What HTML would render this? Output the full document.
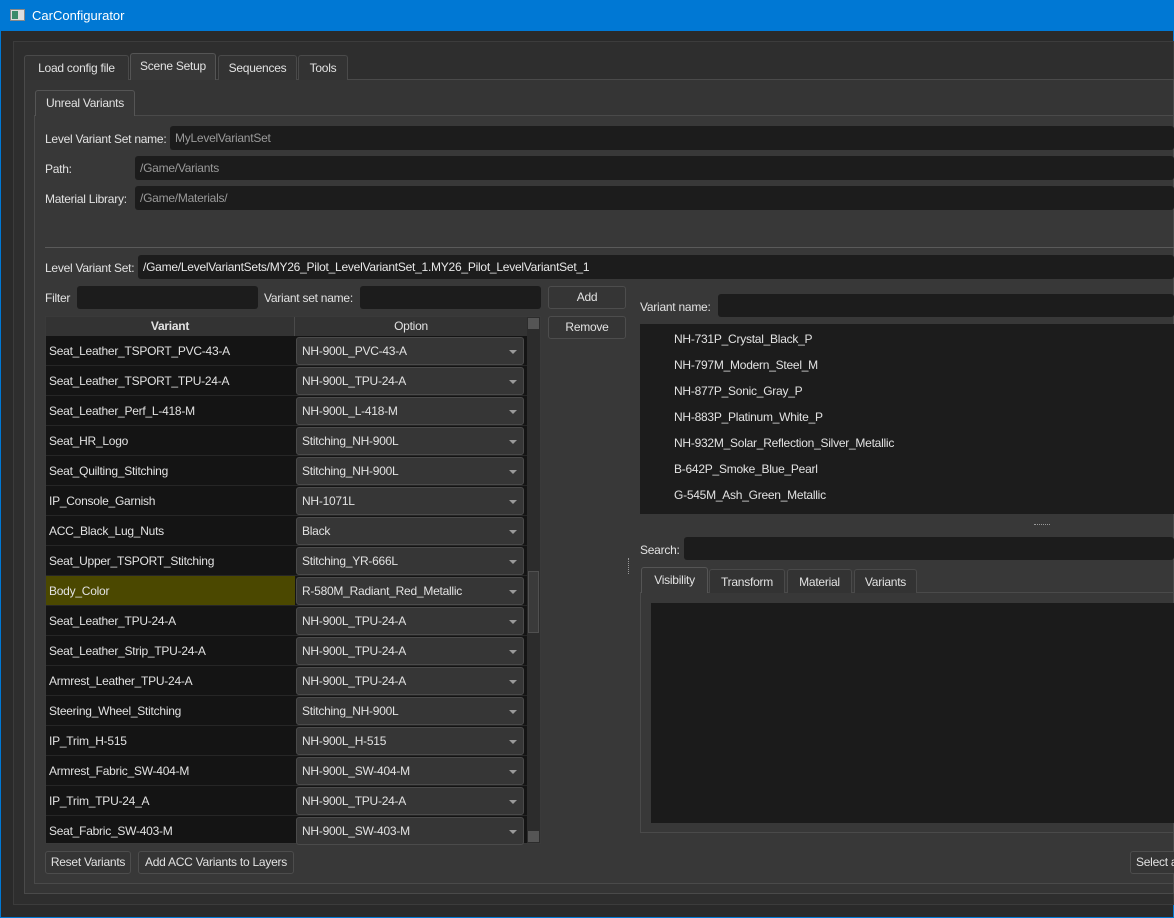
<!DOCTYPE html>
<html><head><meta charset="utf-8"><style>
*{box-sizing:border-box;margin:0;padding:0}
body{width:1174px;height:918px;overflow:hidden;background:#2a2a2a;font-family:"Liberation Sans",sans-serif;font-size:12px;letter-spacing:-0.25px;color:#e2e2e2;position:relative}
.a{position:absolute}
.title{left:0;top:0;width:1174px;height:31px;background:#0078d4;color:#fff;font-size:13px;letter-spacing:0}
.inp{position:absolute;background:#1c1c1c;border-radius:3px;color:#9a9a9a;padding-left:5px;line-height:24px;white-space:nowrap;overflow:hidden}
.lbl{position:absolute;line-height:14px;white-space:nowrap}
.btn{position:absolute;background:#353535;border:1px solid #4d4d4d;border-radius:3px;text-align:center;line-height:20px;color:#e2e2e2;white-space:nowrap}
.tab{position:absolute;background:#333;border:1px solid #4a4a4a;border-bottom:none;border-radius:3px 3px 0 0;text-align:center;line-height:24px;font-size:12px}
.row{position:absolute;left:46px;width:481px;height:30px;border-bottom:1px solid #262626}
.row .v{position:absolute;left:3px;top:8px}
.row .c{position:absolute;left:250px;top:1px;width:228px;height:28px;background:#363636;border:1px solid #4b4b4b;border-radius:3px;padding-left:5px;line-height:27px}
.row .c:after{content:"";position:absolute;right:6px;top:12px;border-left:4px solid transparent;border-right:4px solid transparent;border-top:4px solid #9a9a9a}
.li{position:absolute;left:674px}
</style></head><body>
<div class="a title"><div class="a" style="left:10px;top:9px;width:15px;height:12px;background:#ddd;border:1px solid #888"><div class="a" style="left:1px;top:1px;width:6px;height:8px;background:#3a8a6a"></div></div><div class="a" style="left:32px;top:8px">CarConfigurator</div></div>
<div class="a" style="left:0;top:31px;width:1174px;height:887px;border:1px solid #0078d4;border-top:none;background:#2a2a2a"></div>
<div class="a" style="left:13px;top:41px;width:1161px;height:864px;border:1px solid #3c3c3c;background:#2e2e2e"></div>
<div class="a" style="left:24px;top:79px;width:1150px;height:815px;background:#353535;border:1px solid #4a4a4a"></div>
<div class="tab" style="left:24px;top:55px;width:105px;height:25px">Load config file</div>
<div class="tab" style="left:130px;top:53px;width:86px;height:27px;background:#383838;border-color:#555">Scene Setup</div>
<div class="tab" style="left:218px;top:55px;width:79px;height:25px">Sequences</div>
<div class="tab" style="left:298px;top:55px;width:50px;height:25px">Tools</div>
<div class="a" style="left:34px;top:115px;width:1140px;height:769px;background:#383838;border:1px solid #4a4a4a"></div>
<div class="tab" style="left:35px;top:90px;width:100px;height:26px;background:#383838;border-color:#555">Unreal Variants</div>
<div class="lbl" style="left:45px;top:132px">Level Variant Set name:</div>
<div class="inp" style="left:170px;top:126px;width:1004px;height:24px">MyLevelVariantSet</div>
<div class="lbl" style="left:45px;top:162px">Path:</div>
<div class="inp" style="left:135px;top:156px;width:1039px;height:24px">/Game/Variants</div>
<div class="lbl" style="left:45px;top:192px">Material Library:</div>
<div class="inp" style="left:135px;top:186px;width:1039px;height:24px">/Game/Materials/</div>
<div class="a" style="left:45px;top:247px;width:1129px;height:1px;background:#5a5a5a"></div>
<div class="lbl" style="left:45px;top:261px">Level Variant Set:</div>
<div class="inp" style="left:138px;top:255px;width:1036px;height:24px;color:#e8e8e8">/Game/LevelVariantSets/MY26_Pilot_LevelVariantSet_1.MY26_Pilot_LevelVariantSet_1</div>
<div class="lbl" style="left:45px;top:291px">Filter</div>
<div class="inp" style="left:77px;top:286px;width:181px;height:23px"></div>
<div class="lbl" style="left:264px;top:291px">Variant set name:</div>
<div class="inp" style="left:360px;top:286px;width:181px;height:23px"></div>
<div class="btn" style="left:548px;top:286px;width:78px;height:23px">Add</div>
<div class="btn" style="left:548px;top:316px;width:78px;height:23px">Remove</div>
<div class="a" style="left:45px;top:316px;width:496px;height:528px;background:#141414;border:1px solid #3a3a3a"></div>
<div class="a" style="left:46px;top:317px;width:249px;height:19px;background:#333;border-right:1px solid #4a4a4a;text-align:center;line-height:19px;font-weight:bold">Variant</div>
<div class="a" style="left:295px;top:317px;width:232px;height:19px;background:#333;text-align:center;line-height:19px">Option</div>
<div class="a" style="left:527px;top:317px;width:13px;height:526px;background:#2c2c2c"></div>
<div class="a" style="left:528px;top:318px;width:11px;height:11px;background:#555"></div>
<div class="a" style="left:528px;top:571px;width:11px;height:62px;background:#3a3a3a;border:1px solid #505050"></div>
<div class="a" style="left:528px;top:831px;width:11px;height:11px;background:#555"></div>
<div class="row" style="top:336px"><span class="v">Seat_Leather_TSPORT_PVC-43-A</span><div class="c">NH-900L_PVC-43-A</div></div>
<div class="row" style="top:366px"><span class="v">Seat_Leather_TSPORT_TPU-24-A</span><div class="c">NH-900L_TPU-24-A</div></div>
<div class="row" style="top:396px"><span class="v">Seat_Leather_Perf_L-418-M</span><div class="c">NH-900L_L-418-M</div></div>
<div class="row" style="top:426px"><span class="v">Seat_HR_Logo</span><div class="c">Stitching_NH-900L</div></div>
<div class="row" style="top:456px"><span class="v">Seat_Quilting_Stitching</span><div class="c">Stitching_NH-900L</div></div>
<div class="row" style="top:486px"><span class="v">IP_Console_Garnish</span><div class="c">NH-1071L</div></div>
<div class="row" style="top:516px"><span class="v">ACC_Black_Lug_Nuts</span><div class="c">Black</div></div>
<div class="row" style="top:546px"><span class="v">Seat_Upper_TSPORT_Stitching</span><div class="c">Stitching_YR-666L</div></div>
<div class="row" style="top:576px"><div class="a" style="left:0;top:0;width:249px;height:29px;background:#4b4800"></div><span class="v">Body_Color</span><div class="c">R-580M_Radiant_Red_Metallic</div></div>
<div class="row" style="top:606px"><span class="v">Seat_Leather_TPU-24-A</span><div class="c">NH-900L_TPU-24-A</div></div>
<div class="row" style="top:636px"><span class="v">Seat_Leather_Strip_TPU-24-A</span><div class="c">NH-900L_TPU-24-A</div></div>
<div class="row" style="top:666px"><span class="v">Armrest_Leather_TPU-24-A</span><div class="c">NH-900L_TPU-24-A</div></div>
<div class="row" style="top:696px"><span class="v">Steering_Wheel_Stitching</span><div class="c">Stitching_NH-900L</div></div>
<div class="row" style="top:726px"><span class="v">IP_Trim_H-515</span><div class="c">NH-900L_H-515</div></div>
<div class="row" style="top:756px"><span class="v">Armrest_Fabric_SW-404-M</span><div class="c">NH-900L_SW-404-M</div></div>
<div class="row" style="top:786px"><span class="v">IP_Trim_TPU-24_A</span><div class="c">NH-900L_TPU-24-A</div></div>
<div class="row" style="top:816px;height:27px;border:none"><span class="v">Seat_Fabric_SW-403-M</span><div class="c">NH-900L_SW-403-M</div></div>
<div class="btn" style="left:45px;top:851px;width:86px;height:23px">Reset Variants</div>
<div class="btn" style="left:138px;top:851px;width:156px;height:23px">Add ACC Variants to Layers</div>
<div class="lbl" style="left:640px;top:300px">Variant name:</div>
<div class="inp" style="left:718px;top:294px;width:456px;height:23px"></div>
<div class="a" style="left:640px;top:324px;width:534px;height:190px;background:#1c1c1c"></div>
<div class="li" style="top:332px">NH-731P_Crystal_Black_P</div>
<div class="li" style="top:358px">NH-797M_Modern_Steel_M</div>
<div class="li" style="top:384px">NH-877P_Sonic_Gray_P</div>
<div class="li" style="top:410px">NH-883P_Platinum_White_P</div>
<div class="li" style="top:436px">NH-932M_Solar_Reflection_Silver_Metallic</div>
<div class="li" style="top:462px">B-642P_Smoke_Blue_Pearl</div>
<div class="li" style="top:488px">G-545M_Ash_Green_Metallic</div>
<div class="a" style="left:1034px;top:524px;width:16px;height:1px;border-top:1px dotted #999"></div>
<div class="a" style="left:628px;top:558px;width:1px;height:16px;border-left:1px dotted #999"></div>
<div class="lbl" style="left:640px;top:543px">Search:</div>
<div class="inp" style="left:684px;top:537px;width:490px;height:23px"></div>
<div class="a" style="left:640px;top:592px;width:534px;height:241px;background:#383838;border:1px solid #4a4a4a"></div>
<div class="tab" style="left:641px;top:567px;width:67px;height:26px;background:#383838;border-color:#555">Visibility</div>
<div class="tab" style="left:709px;top:569px;width:76px;height:24px">Transform</div>
<div class="tab" style="left:787px;top:569px;width:65px;height:24px">Material</div>
<div class="tab" style="left:854px;top:569px;width:63px;height:24px">Variants</div>
<div class="a" style="left:651px;top:603px;width:523px;height:220px;background:#1b1b1b"></div>
<div class="btn" style="left:1130px;top:851px;width:60px;height:23px;text-align:left;padding-left:5px">Select a</div>
</body></html>
